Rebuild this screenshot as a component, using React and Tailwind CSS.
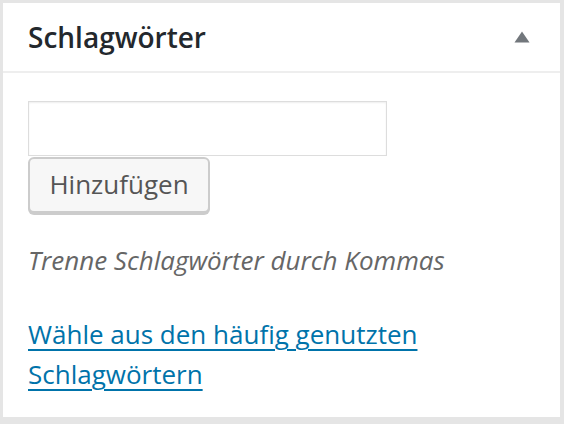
export default function App() {
  return (
    <div className="w-[564px] h-[424px] bg-[#e5e5e5] pt-[3px] pl-[3px] pr-[4px] pb-[7px] font-['Open_Sans',sans-serif]">
      <div className="h-full bg-white flex flex-col">
        <div className="h-[70px] shrink-0 border-b-2 border-[#eeeeee] flex items-center justify-between pl-[25px] pr-[30px]">
          <h2 className="text-[28px] leading-[39px] font-semibold text-[#23282d]">Schlagwörter</h2>
          <svg width="16" height="12" viewBox="0 0 16 12">
            <polygon points="8,0.5 15.5,11.5 0.5,11.5" fill="#72777c" />
          </svg>
        </div>
        <div className="px-[25px] pt-[28px]">
          <input
            type="text"
            className="block w-[359px] h-[55px] border border-[#dddddd] bg-white shadow-[inset_0_1px_2px_rgba(0,0,0,0.07)] outline-none"
          />
          <button className="block mt-[1px] w-[182px] h-[56px] rounded-[6px] border-2 border-[#cccccc] bg-[#f7f7f7] shadow-[0_2px_0_#cccccc] text-[26px] text-[#555555] leading-none pb-[2px]">
            Hinzufügen
          </button>
          <p className="mt-[28px] text-[26px] leading-[39px] italic text-[#666666]">
            Trenne Schlagwörter durch Kommas
          </p>
          <p className="mt-[34px] text-[26px] leading-[40px]">
            <a href="#" className="text-[#0073aa] underline underline-offset-[5px] decoration-[2px]">
              Wähle aus den häufig genutzten Schlagwörtern
            </a>
          </p>
        </div>
      </div>
    </div>
  );
}
